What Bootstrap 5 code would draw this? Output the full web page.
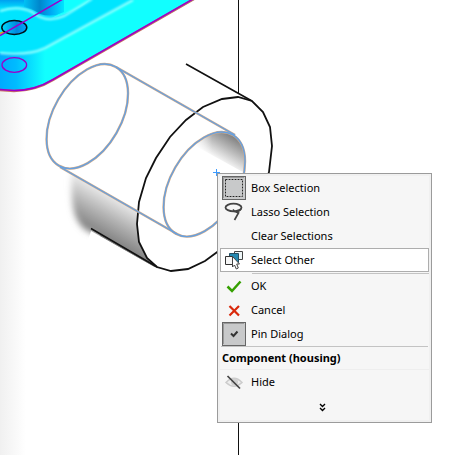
<!DOCTYPE html>
<html lang="en">
<head>
<meta charset="utf-8">
<meta name="viewport" content="width=device-width, initial-scale=1">
<title>Component shortcut menu</title>
<link href="https://cdn.jsdelivr.net/npm/bootstrap@5.3.0/dist/css/bootstrap.min.css" rel="stylesheet">
<style>
  body { font-family: "Noto Sans", "Open Sans", sans-serif; font-size: 11px; line-height: 16px; color: #000; }
  .viewport { background: linear-gradient(90deg, #f0f0f0 0, #fff 26px); }
  .model { width: 473px; height: 455px; }
  .edge-under { stroke: #d3ab88; stroke-width: 2.4; fill: none; }
  .edge-over { stroke: #66a0e0; stroke-width: 1.4; fill: none; }
  .shortcut { left: 217px; top: 173px; width: 215px; padding: 2px; background: #f6f6f6; border: 1px solid #9b9b9b; box-shadow: inset 0 0 0 2px #f0f0f0; }
  .cmd { height: 24px; padding: 0 0 0 1px; gap: 5px; background: none; border: 1px solid transparent; color: #000; }
  .cmd.hot { background: #fff; border-color: #adadad; }
  .glyph { width: 24px; height: 24px; }
  .rule { height: 1px; background: #c3c3c3; }
  .rule.inset { margin: 1px 0 0 32px; }
  .rule.wide { margin: 0 1px; }
  .rule.faint { background: #eee; }
  .group-title { height: 22px; padding-left: 2px; }
  .more { height: 26px; padding: 0 4px 0 0; background: none; }
</style>
<script src="https://cdn.jsdelivr.net/npm/bootstrap@5.3.0/dist/js/bootstrap.bundle.min.js"></script>
</head>
<body class="bg-white">
<main class="viewport position-relative overflow-hidden min-vh-100">
  <svg class="model d-block" viewBox="0 0 473 455" role="img" aria-label="Housing and bushing model">
    <defs>
      <linearGradient id="side" x1="0" x2="1"><stop offset="0" stop-color="#0af"/><stop offset=".35" stop-color="#0bf"/><stop offset="1" stop-color="#1ff"/></linearGradient>
      <linearGradient id="pocket" x1="0" x2="1"><stop offset="0" stop-color="#00d0ff"/><stop offset=".45" stop-color="#0086cc"/><stop offset=".7" stop-color="#00a8f4"/><stop offset="1" stop-color="#00e5ff"/></linearGradient>
      <linearGradient id="hole" x1="0" x2="1"><stop offset="0" stop-color="#0df"/><stop offset=".6" stop-color="#08d"/><stop offset="1" stop-color="#0af"/></linearGradient>
      <linearGradient id="boss" x1="0" x2="0" y1="0" y2="1"><stop offset="0" stop-color="#00a0f0"/><stop offset="1" stop-color="#00e5ff"/></linearGradient>
      <linearGradient id="shade" gradientUnits="userSpaceOnUse" x1="114" y1="188" x2="87" y2="236"><stop offset="0" stop-color="#fff"/><stop offset=".5" stop-color="#b4b4b4"/><stop offset="1" stop-color="#707070"/></linearGradient>
      <linearGradient id="bore" gradientUnits="userSpaceOnUse" x1="216" y1="160" x2="234" y2="131"><stop offset="0" stop-color="#fff"/><stop offset=".45" stop-color="#bbb"/><stop offset="1" stop-color="#6c6c6c"/></linearGradient>
      <linearGradient id="boreFade" gradientUnits="userSpaceOnUse" x1="190" y1="0" x2="212" y2="0"><stop offset="0" stop-color="#fff"/><stop offset="1" stop-color="#fff" stop-opacity="0"/></linearGradient>
      <filter id="soft"><feGaussianBlur stdDeviation="3"/></filter>
      <filter id="glow"><feGaussianBlur stdDeviation=".9"/></filter>
      <clipPath id="body"><path d="M0 0H194L53 80Q35 91 14 91L0 90Z"/></clipPath>
      <clipPath id="boreClip"><ellipse cx="204" cy="184" rx="57.5" ry="33.6" transform="rotate(-60 204 184)"/></clipPath>
      <clipPath id="shadeClip"><path d="M55 163 63 168 160 226V270L91 231 88 240H50Z"/></clipPath>
    </defs>

    <g clip-path="url(#body)">
      <rect width="200" height="95" fill="#1ff"/>
      <path d="M0 52Q28 55 45 46V95H0Z" fill="url(#side)"/>
      <path d="M0 53Q28 56 45 48L133 0H0Z" fill="#00e5ff"/>
      <path d="M92 0 60 18Q48 22 38 15 20 5 0 10V0Z" fill="#00dcff"/>
      <path d="M90 0H62V12L52 18Q80 10 90 0Z" fill="#1ff"/>
      <path d="M20 0H64V12Q52 18 40 14Q32 8 20 7Z" fill="url(#pocket)"/>
      <path d="M0 0H24V7Q10 6 0 9Z" fill="url(#boss)"/>
      <g fill="none" stroke="#9ff" stroke-width="2" filter="url(#glow)">
        <path d="M0 11Q18 5 32 12 46 24 64 16L92-1"/>
        <path d="M0 53Q28 56 45 48L133 0"/>
      </g>
      <path d="M0 33.500 10 29" stroke="#e90" stroke-width="1.500"/>
      <ellipse cx="14.300" cy="27.500" rx="12.500" ry="7" fill="url(#hole)" stroke="#001018" stroke-width="1.500"/>
      <path d="M0 35.500 63-1" stroke="#90c" stroke-width="1.500"/>
      <ellipse cx="14.300" cy="65" rx="12.300" ry="7.300" fill="none" stroke="#90c" stroke-width="1.300"/>
    </g>
    <path d="M194-1 53 80Q35 91 14 91L0 90" fill="none" stroke="#c87060" stroke-width="2.500"/>
    <path d="M193-1 53 79.500Q35 90.500 14 90.500L0 89.500" fill="none" stroke="#90c" stroke-width="1.500"/>

    <g clip-path="url(#shadeClip)">
      <path d="M72 166 155 212V274L92 233Q80 229 75 215 70 200 72 166Z" fill="url(#shade)" filter="url(#soft)"/>
      <path d="M100 184 155 212V268L100 236Z" fill="url(#shade)"/>
    </g>
    <path d="M238 97 222 99 203 107 186 120 170 137 156 158 146 178 139 202 137 224 139 242 147 258 157 267 171 271 188 269 205 261 224 247 245 223 260 196 269 172 272 146 270 127 263 112 252 101Z" fill="#fff" stroke="#111" stroke-width="1.800"/>
    <path d="M186 64 252 101M91 228.500 157 267" stroke="#111" stroke-width="1.600"/>
    <path d="M238.500 0V94M238.500 420V455" stroke="#111"/>
    <g clip-path="url(#boreClip)">
      <path d="M190 143 248 175V125H190Z" fill="url(#bore)"/>
      <rect x="188" y="125" width="30" height="45" fill="url(#boreFade)"/>
    </g>
    <g class="edge-under">
      <ellipse cx="87.300" cy="116.300" rx="57" ry="33.600" transform="rotate(-60 87.300 116.300)"/>
      <ellipse cx="204.300" cy="184.300" rx="57" ry="33.600" transform="rotate(-60 204.300 184.300)"/>
      <path d="M116 67 235 135M60 167 177 234"/>
    </g>
    <g class="edge-over">
      <ellipse cx="87.300" cy="116.300" rx="57" ry="33.600" transform="rotate(-60 87.300 116.300)"/>
      <ellipse cx="204.300" cy="184.300" rx="57" ry="33.600" transform="rotate(-60 204.300 184.300)"/>
      <path d="M116 67 235 135M60 167 177 234"/>
    </g>
    <path d="M213 172.500H220M216.500 169V176" stroke="#3d9bff"/>
  </svg>

  <div class="shortcut position-absolute d-flex flex-column" role="menu" aria-label="Shortcut menu">
    <button type="button" class="cmd d-flex align-items-center text-start" role="menuitemcheckbox" aria-checked="true">
      <svg class="glyph" viewBox="0 0 24 24" aria-hidden="true"><rect x=".5" y=".5" width="23" height="23" fill="#c8c9ca" stroke="#666"/><path d="M1.500 22V1.500H22" fill="none" stroke="#999"/><rect x="3.500" y="3.500" width="17" height="17" fill="none" stroke="#eee"/><rect x="3.500" y="3.500" width="17" height="17" fill="none" stroke="#222" stroke-dasharray="2 1"/></svg>
      <span>Box Selection</span>
    </button>
    <button type="button" class="cmd d-flex align-items-center text-start" role="menuitem">
      <svg class="glyph" viewBox="0 0 24 24" fill="none" stroke="#444" aria-hidden="true"><ellipse cx="11.500" cy="7.500" rx="8" ry="3.800" stroke-width="1.800"/><path d="M19 9Q17 12 12.500 11.500L11 9.500M13 11.500 16.500 13 12.500 20" stroke-width="1.700"/></svg>
      <span>Lasso Selection</span>
    </button>
    <button type="button" class="cmd d-flex align-items-center text-start" role="menuitem">
      <span class="glyph"></span><span>Clear Selections</span>
    </button>
    <button type="button" class="cmd hot d-flex align-items-center text-start" role="menuitem">
      <svg class="glyph" viewBox="0 0 24 24" aria-hidden="true"><path d="M12.500 3.500H20.500V11.500H12.500Z" fill="#eef6f8" stroke="#444"/><path d="M7.500 5.500H16.500V14.500H7.500Z" fill="#2588b0" stroke="#234e63"/><path d="M3.500 8.500H10.500V16.500H3.500Z" fill="#f5f5f5" stroke="#333"/><path d="M10.500 8.500V19L12.500 17 14.300 21 16.300 20 14.700 16H17.500Z" fill="#fff" stroke="#444"/></svg>
      <span>Select Other</span>
    </button>
    <div class="rule inset" role="separator"></div>
    <button type="button" class="cmd d-flex align-items-center text-start" role="menuitem">
      <svg class="glyph" viewBox="0 0 24 24" aria-hidden="true"><path d="M5.500 12.500 10 17 18.500 7.500" fill="none" stroke="#35a000" stroke-width="2.500"/></svg>
      <span>OK</span>
    </button>
    <button type="button" class="cmd d-flex align-items-center text-start" role="menuitem">
      <svg class="glyph" viewBox="0 0 24 24" aria-hidden="true"><path d="M7.500 8 17 17.500M17 8 7.500 17.500" stroke="#d9290b" stroke-width="2.200"/></svg>
      <span>Cancel</span>
    </button>
    <button type="button" class="cmd d-flex align-items-center text-start" role="menuitemcheckbox" aria-checked="true">
      <svg class="glyph" viewBox="0 0 24 24" aria-hidden="true"><rect x=".5" y=".5" width="23" height="23" fill="#c8c9ca" stroke="#666"/><path d="M1.500 22V1.500H22" fill="none" stroke="#999"/><path d="M9 11.500 11.500 14 15.500 9.500" fill="none" stroke="#333" stroke-width="2"/></svg>
      <span>Pin Dialog</span>
    </button>
    <div class="rule wide" role="separator"></div>
    <div class="group-title d-flex align-items-center fw-bold">Component (housing)</div>
    <div class="rule faint" role="separator"></div>
    <button type="button" class="cmd d-flex align-items-center text-start" role="menuitem">
      <svg class="glyph" viewBox="0 0 24 24" aria-hidden="true"><path d="M4 12.500Q12 4 20 12.500 12 20 4 12.500Z" fill="#eee" stroke="#ccc" stroke-width="1.500"/><circle cx="12.500" cy="12" r="3.500" fill="#d0d0d0"/><path d="M5.500 6 18 18.500" stroke="#444" stroke-width="1.700"/></svg>
      <span>Hide</span>
    </button>
    <button type="button" class="more border-0 d-flex justify-content-center align-items-center" aria-label="Show more">
      <svg width="9" height="10" viewBox="0 0 9 10" fill="none" stroke="#000" stroke-width="1.400" aria-hidden="true"><path d="M2 2 4.500 4.500 7 2M2 6 4.500 8.500 7 6"/></svg>
    </button>
  </div>
</main>
</body>
</html>
